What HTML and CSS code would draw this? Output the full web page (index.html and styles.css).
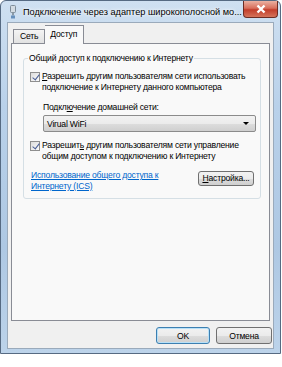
FILE: index.html
```html
<!DOCTYPE html>
<html lang="ru">
<head>
<meta charset="UTF-8">
<title>Подключение через адаптер</title>
<link rel="stylesheet" href="styles.css">
</head>
<body>

<div class="window">
  <div class="titlebar">
    <svg class="app_icon" width="8" height="15" viewBox="0 0 8 15">
      <rect x="1.5" y="0.5" width="5" height="7" rx="1" fill="#d3dbe2" stroke="#7d8c99"/>
      <rect x="3" y="7.5" width="2" height="3" fill="#8a99a6"/>
      <rect x="2" y="10.5" width="4" height="3" fill="#6690bd"/>
    </svg>
    <span class="title">Подключение через адаптер широкополосной мо...</span>
    <div class="close">
      <svg width="12" height="10" viewBox="0 0 12 10">
        <path d="M2.5 1.5 L9.5 8.5 M9.5 1.5 L2.5 8.5" stroke="#fff" stroke-width="2.4"/>
      </svg>
    </div>
  </div>

  <div class="client">
    <div class="tabs">
      <div class="tab">Сеть</div>
      <div class="tab tab_active">Доступ</div>
    </div>

    <div class="panel">
      <fieldset class="group">
        <legend>Общий доступ к подключению к Интернету</legend>

        <div class="check_row">
          <span class="checkbox checked"></span>
          <span><u>Р</u>азрешить другим пользователям сети использовать подключение к Интернету данного компьютера</span>
        </div>

        <div class="home_net">
          <div class="label">Подкл<u>ю</u>чение домашней сети:</div>
          <div class="combo">
            <span>Virual WiFi</span>
            <span class="arrow"></span>
          </div>
        </div>

        <div class="check_row">
          <span class="checkbox checked"></span>
          <span>Разрешит<u>ь</u> другим пользователям сети управление общим доступом к подключению к Интернету</span>
        </div>

        <div class="bottom_row">
          <a class="link" href="#">Использование общего доступа к Интернету (ICS)</a>
          <button class="btn btn_small"><u>Н</u>астройка...</button>
        </div>
      </fieldset>
    </div>

    <div class="buttons">
      <button class="btn btn_default">OK</button>
      <button class="btn btn_cancel">Отмена</button>
    </div>
  </div>
</div>

</body>
</html>
```

FILE: styles.css
```css
* {
  box-sizing: border-box;
}

body {
  margin: 0;
  background: #fff;
  font-family: "Liberation Sans", Arial, sans-serif;
  font-size: 8.6px;
  letter-spacing: -0.2px;
  color: #000;
}

.window {
  width: 281px;
  height: 354px;
  border: 1px solid #566a82;
  border-radius: 6px 6px 0 0;
  background: linear-gradient(to bottom, #cfe0f1 0%, #b9d1ea 30%, #aec8e3 70%, #bcd3ea 100%);
  padding: 0 0 4px 0;
  display: flex;
  flex-direction: column;
}

.titlebar {
  height: 21px;
  flex: none;
  display: flex;
  align-items: center;
  padding: 0 2px 0 8px;
}

.app_icon {
  margin: 1px 6px 0 0;
}

.title {
  flex: 1;
  white-space: nowrap;
  overflow: hidden;
  font-size: 9.2px;
  letter-spacing: 0;
  color: #000;
  text-shadow: 0 0 5px #fff, 0 0 3px #fff;
}

.close {
  width: 35px;
  height: 17px;
  flex: none;
  align-self: flex-start;
  border: 1px solid #6b2c24;
  border-top: none;
  border-radius: 0 0 4px 4px;
  background: linear-gradient(to bottom, #eab1a2 0%, #d86f5c 45%, #c23d2b 55%, #d5735b 100%);
  display: flex;
  align-items: center;
  justify-content: center;
}

.client {
  flex: 1;
  margin: 0 6px;
  background: #f0f0f0;
  border: 1px solid #9aaabb;
  display: flex;
  flex-direction: column;
  padding: 0 3px 0 3px;
}

.tabs {
  display: flex;
  align-items: flex-end;
  height: 20px;
  padding-left: 2px;
  position: relative;
  z-index: 1;
}

.tab {
  height: 14px;
  line-height: 13px;
  padding: 0 6px;
  border: 1px solid #898c95;
  border-bottom: none;
  background: linear-gradient(to bottom, #f4f4f4, #e2e2e2);
}

.tab_active {
  height: 19px;
  line-height: 16px;
  padding: 0 6px 0 5px;
  border-left: none;
  margin-bottom: -1px;
  background: #f9f9f9;
}

.panel {
  height: 278px;
  flex: none;
  border: 1px solid #898c95;
  background: #f9f9f9;
  padding: 9px 8px 0 11px;
}

.group {
  margin: 0;
  padding: 7px 4px 6px 6px;
  border: 1px solid #d5dfe5;
  border-radius: 3px;
}

.group legend {
  padding: 0 1px;
  margin-left: -2px;
  line-height: 11px;
}

.check_row {
  display: flex;
  align-items: flex-start;
  line-height: 11px;
}

.checkbox {
  width: 10px;
  height: 10px;
  flex: none;
  border: 1px solid #8f8f8f;
  background: linear-gradient(to bottom right, #dcdcdc, #fbfbfb);
  margin: 1px 2px 0 0;
  position: relative;
}

.checked::after {
  content: "";
  position: absolute;
  left: 2.5px;
  top: -0.5px;
  width: 3px;
  height: 6px;
  border: solid #4a5f97;
  border-width: 0 1.6px 1.6px 0;
  transform: rotate(38deg);
}

.home_net {
  padding: 9px 0 8px 13px;
}

.label {
  line-height: 11px;
  margin-bottom: 2px;
}

.combo {
  height: 17px;
  border: 1px solid #8b8b8b;
  border-radius: 2px;
  background: linear-gradient(to bottom, #f2f2f2 0%, #ebebeb 50%, #dddddd 51%, #cfcfcf 100%);
  display: flex;
  align-items: center;
  justify-content: space-between;
  padding: 0 6px 0 3px;
}

.arrow {
  width: 0;
  height: 0;
  border-left: 3px solid transparent;
  border-right: 3px solid transparent;
  border-top: 3px solid #000;
}

.bottom_row {
  display: flex;
  justify-content: space-between;
  align-items: flex-start;
  margin-top: 7px;
  padding-right: 2px;
}

.link {
  width: 150px;
  color: #0066cc;
  line-height: 11px;
  margin-left: 1px;
  margin-top: 1px;
}

.btn {
  font-family: inherit;
  font-size: 8.6px;
  letter-spacing: inherit;
  color: #000;
  border: 1px solid #707070;
  border-radius: 3px;
  background: linear-gradient(to bottom, #f2f2f2 0%, #ebebeb 50%, #dddddd 51%, #cfcfcf 100%);
  padding: 0;
  height: 17px;
}

.btn_small {
  width: 56px;
  height: 15px;
  margin-top: 2px;
  line-height: 11px;
}

.btn_default {
  width: 54px;
  border-color: #3c7fb1;
  box-shadow: inset 0 0 0 1px #b8e0f7;
}

.btn_cancel {
  width: 56px;
}

.buttons {
  display: flex;
  justify-content: flex-end;
  gap: 6px;
  padding: 6px 0 0 0;
  margin-right: -2px;
}
```
